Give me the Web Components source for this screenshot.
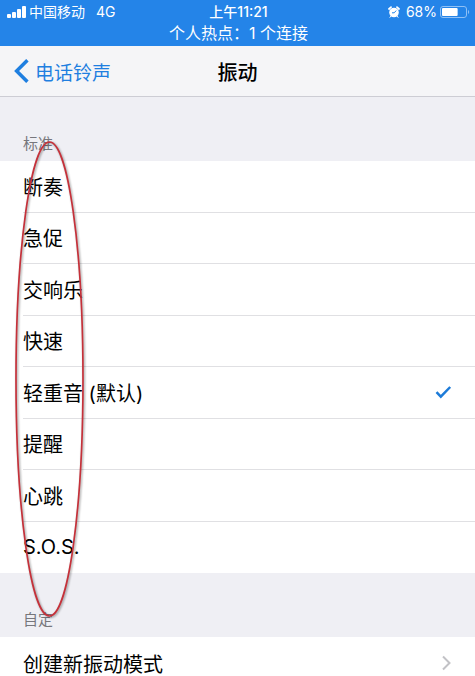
<!DOCTYPE html>
<html lang="zh-CN">
<head>
<meta charset="utf-8">
<meta name="viewport" content="width=device-width, initial-scale=1">
<title>振动</title>
<style>
  body {
    margin: 0;
    background: #efeff4;
    color: #000;
    font-family: Inter, "Noto Sans CJK SC", sans-serif;
    --blue: #2484e8;
    --line: #e0e0e3;
    --inset: 23px;
  }

  main {
    position: relative;
    overflow: hidden;
  }
</style>
</head>
<body>
<status-bar carrier="中国移动" network="4G" time="上午11:21" battery="68" notice="个人热点：1 个连接"></status-bar>
<nav-bar back="电话铃声">振动</nav-bar>
<main>
  <settings-group>
    <span slot="title">标准</span>
    <option-list name="vibration" selected="轻重音 (默认)" options="断奏|急促|交响乐|快速|轻重音 (默认)|提醒|心跳|S.O.S."></option-list>
  </settings-group>
  <settings-group>
    <span slot="title">自定</span>
    <link-row>创建新振动模式</link-row>
  </settings-group>
  <ring-mark></ring-mark>
</main>

<script>
class StatusBar extends HTMLElement {
  constructor() {
    super();
    this.attachShadow({ mode: "open" });
  }

  connectedCallback() {
    const battery = Number(this.getAttribute("battery"));
    this.shadowRoot.innerHTML = `
      <style>
        :host {
          display: block;
          padding: 2px 5px 1px 7px;
          background: var(--blue);
          color: #fff;
          font-size: 14px;
          line-height: 20px;
        }

        .top {
          display: grid;
          grid-template-columns: 1fr auto 1fr;
          align-items: center;
        }

        .side {
          display: flex;
          align-items: center;
          gap: 3px;
        }

        .network {
          margin-left: 8px;
        }

        .right {
          justify-content: flex-end;
        }

        .time {
          font-weight: 500;
        }

        .alarm {
          margin-right: 3px;
        }

        .notice {
          text-align: center;
          font-size: 16px;
          line-height: 23px;
        }

        svg {
          display: block;
        }
      </style>
      <div class="top">
        <div class="side">
          <svg width="19" height="12" viewBox="0 0 19 12" fill="#fff" aria-hidden="true">
            <rect x="0" y="8" width="4" height="4" rx="1"/>
            <rect x="5" y="6" width="4" height="6" rx="1"/>
            <rect x="10" y="3" width="4" height="9" rx="1"/>
            <rect x="15" y="0" width="4" height="12" rx="1"/>
          </svg>
          <span class="carrier"></span>
          <span class="network"></span>
        </div>
        <span class="time"></span>
        <div class="side right">
          <svg class="alarm" width="12" height="12" viewBox="0 0 12 12" aria-hidden="true">
            <path d="M1 3 3 1.200M11 3 9 1.200" stroke="#fff" stroke-width="1.800" stroke-linecap="round"/>
            <path d="M3 10 2 11.300M9 10l1 1.300" stroke="#fff" stroke-linecap="round"/>
            <circle cx="6" cy="6.500" r="4.800" fill="#fff"/>
            <path d="M6.200 6.800 8.200 4.600M6.200 6.800H4" fill="none" stroke="#2484e8"/>
          </svg>
          <span class="level"></span>
          <svg width="30" height="13" viewBox="0 0 30 13" aria-hidden="true">
            <rect x=".5" y=".5" width="26" height="11" rx="2.5" fill="none" stroke="#8fc0f5"/>
            <rect x="2" y="2" width="${23 * battery / 100}" height="8" rx="1" fill="#fff"/>
            <path d="M28 4v4c1.600-.6 1.600-3.400 0-4z" fill="#8fc0f5"/>
          </svg>
        </div>
      </div>
      <div class="notice"></div>
    `;
    for (const key of ["carrier", "network", "time", "notice"]) {
      this.shadowRoot.querySelector(`.${key}`).textContent = this.getAttribute(key);
    }
    this.shadowRoot.querySelector(".level").textContent = `${battery}%`;
  }
}

class NavBar extends HTMLElement {
  constructor() {
    super();
    this.attachShadow({ mode: "open" });
  }

  connectedCallback() {
    this.shadowRoot.innerHTML = `
      <style>
        :host {
          display: grid;
          grid-template-columns: 1fr auto 1fr;
          align-items: center;
          height: 50px;
          padding: 0 14px;
          background: #f5f5f7;
          border-bottom: 1px solid #cdcdd4;
        }

        a {
          display: flex;
          align-items: center;
          gap: 6px;
          color: #1f7fe0;
          font-size: 19px;
          text-decoration: none;
        }

        h1 {
          margin: 0;
          font-size: 20px;
          font-weight: 500;
        }
      </style>
      <a href="#">
        <svg width="15" height="24" viewBox="0 0 15 24" fill="none" stroke="currentColor" stroke-width="3.500" aria-hidden="true">
          <path d="M13.400 1.200 2.600 12l10.800 10.800"/>
        </svg>
        <span></span>
      </a>
      <h1><slot></slot></h1>
    `;
    this.shadowRoot.querySelector("span").textContent = this.getAttribute("back");
  }
}

class SettingsGroup extends HTMLElement {
  constructor() {
    super();
    this.attachShadow({ mode: "open" });
    this.shadowRoot.innerHTML = `
      <style>
        :host {
          display: block;
        }

        h2 {
          display: flex;
          align-items: flex-end;
          box-sizing: border-box;
          height: 64px;
          margin: 0;
          padding: 0 var(--inset) 6px;
          color: #77777c;
          font-size: 15px;
          font-weight: 400;
          line-height: 22px;
        }

        .rows {
          background: #fff;
        }
      </style>
      <h2><slot name="title"></slot></h2>
      <div class="rows"><slot></slot></div>
    `;
  }
}

class OptionList extends HTMLElement {
  constructor() {
    super();
    this.attachShadow({ mode: "open" });
    this.shadowRoot.innerHTML = `
      <style>
        :host {
          display: grid;
          grid-auto-rows: 1fr;
          min-height: 412px;
          font-size: 20px;
        }

        label {
          display: flex;
          align-items: center;
          margin-left: var(--inset);
          padding-right: 23px;
          border-bottom: 1px solid var(--line);
        }

        label:last-child {
          border-color: transparent;
        }

        span {
          flex: 1;
        }

        input {
          appearance: none;
          position: absolute;
          margin: 0;
        }

        svg {
          visibility: hidden;
        }

        input:checked ~ svg {
          visibility: visible;
        }
      </style>
    `;
  }

  connectedCallback() {
    for (const option of this.getAttribute("options").split("|")) {
      const label = document.createElement("label");
      label.innerHTML = `
        <input type="radio">
        <span></span>
        <svg width="17" height="14" viewBox="0 0 17 14" fill="none" stroke="#1d7bd8" stroke-width="2.500" aria-hidden="true">
          <path d="M1.500 7.200 5.800 11.600 15.200 2"/>
        </svg>
      `;
      const input = label.querySelector("input");
      input.name = this.getAttribute("name");
      input.value = option;
      input.checked = option === this.getAttribute("selected");
      label.querySelector("span").textContent = option;
      this.shadowRoot.append(label);
    }
  }
}

class LinkRow extends HTMLElement {
  constructor() {
    super();
    this.attachShadow({ mode: "open" });
    this.shadowRoot.innerHTML = `
      <style>
        :host {
          display: block;
        }

        button {
          display: flex;
          align-items: center;
          justify-content: space-between;
          width: 100%;
          height: 52px;
          padding: 0 var(--inset);
          border: 0;
          background: none;
          color: inherit;
          font: inherit;
          font-size: 20px;
        }
      </style>
      <button type="button">
        <slot></slot>
        <svg width="11" height="16" viewBox="0 0 11 16" fill="none" stroke="#c2c2c6" stroke-width="2" aria-hidden="true">
          <path d="M2 1.500 8.500 8 2 14.500"/>
        </svg>
      </button>
    `;
  }
}

// red ellipse drawn over the option names
class RingMark extends HTMLElement {
  constructor() {
    super();
    this.attachShadow({ mode: "open" });
    this.shadowRoot.innerHTML = `
      <style>
        :host {
          position: absolute;
          top: 40px;
          left: 12px;
          pointer-events: none;
        }

        svg {
          display: block;
          filter: drop-shadow(1px 1px 1px rgba(0, 0, 0, 0.4));
        }
      </style>
      <svg width="76" height="484" viewBox="0 0 76 484" fill="none" stroke="#c5313a" stroke-width="1.700" aria-hidden="true">
        <ellipse cx="37.500" cy="242" rx="33.500" ry="237"/>
      </svg>
    `;
  }
}

customElements.define("status-bar", StatusBar);
customElements.define("nav-bar", NavBar);
customElements.define("settings-group", SettingsGroup);
customElements.define("option-list", OptionList);
customElements.define("link-row", LinkRow);
customElements.define("ring-mark", RingMark);
</script>
</body>
</html>
